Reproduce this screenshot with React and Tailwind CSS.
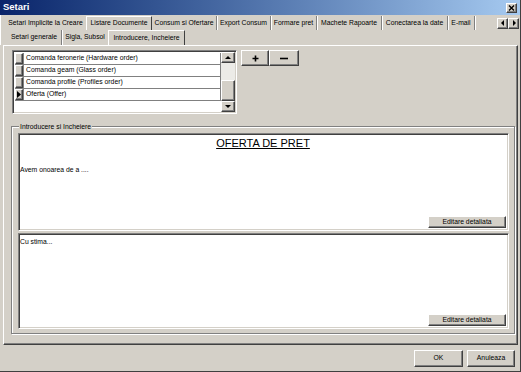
import React from 'react';

const raised = "border border-t-white border-l-white border-r-[#404040] border-b-[#404040] shadow-[inset_-1px_-1px_0_#808080] bg-[#d4d0c8]";
const sunken = "border border-t-[#808080] border-l-[#808080] border-r-white border-b-white shadow-[inset_1px_1px_0_#404040,inset_-1px_-1px_0_#d4d0c8]";

const Arrow = ({ dir }) => {
    const pts = {
        up: "1,5 4,2 7,5",
        down: "1,2 4,5 7,2",
        left: "5,1 2,4 5,7",
        right: "3,1 6,4 3,7",
    }[dir];
    return (
        <svg width="8" height="8" viewBox="0 0 8 8">
            <polygon points={pts} fill="#000" />
        </svg>
    );
};

const Tab = ({ label, w, selected, sep }) => (
    <div
        className={`flex items-center justify-center h-full ${w} ${selected ? 'border-t border-l border-r border-t-white border-l-white border-r-[#404040]' : ''} ${sep ? 'border-r border-r-[#808080] shadow-[1px_0_0_white]' : ''}`}
    >
        <span className="whitespace-nowrap">{label}</span>
    </div>
);

const rows = [
    "Comanda feronerie (Hardware order)",
    "Comanda geam (Glass order)",
    "Comanda profile (Profiles order)",
    "Oferta (Offer)",
];

export default function App() {
    return (
        <div className="w-[521px] h-[372px] bg-[#d4d0c8] overflow-hidden text-[6.8px] text-black font-['Liberation_Sans',Arial,sans-serif] flex flex-col border-r border-b border-r-[#404040] border-b-[#404040]">
            {/* title bar */}
            <div className="h-[15px] shrink-0 flex items-center justify-between pl-[3px] pr-[3px] bg-gradient-to-r from-[#0a246a] to-[#a6caf0]">
                <span className="text-white font-bold text-[9.5px]">Setari</span>
                <div className={`w-[11px] h-[10px] flex items-center justify-center ${raised}`}>
                    <svg width="7" height="6" viewBox="0 0 7 6">
                        <path d="M1 0.5 L6 5.5 M6 0.5 L1 5.5" stroke="#000" strokeWidth="1.4" />
                    </svg>
                </div>
            </div>

            {/* tab row 1 */}
            <div className="h-[15px] shrink-0 flex items-stretch pl-[4px] pt-[1px] border-l border-l-white">
                <Tab label="Setari Implicite la Creare" w="w-[81px]" />
                <Tab label="Listare Documente" w="w-[66px]" selected />
                <Tab label="Consum si Ofertare" w="w-[65px]" sep />
                <Tab label="Export Consum" w="w-[54px]" sep />
                <Tab label="Formare pret" w="w-[46px]" sep />
                <Tab label="Machete Rapoarte" w="w-[65px]" sep />
                <Tab label="Conectarea la date" w="w-[66px]" sep />
                <Tab label="E-mail" w="w-[27px]" sep />
                <div className="flex-1" />
                <div className="flex items-center gap-0 pr-[1px]">
                    <div className={`w-[11px] h-[11px] flex items-center justify-center ${raised}`}><Arrow dir="left" /></div>
                    <div className={`w-[11px] h-[11px] flex items-center justify-center ${raised}`}><Arrow dir="right" /></div>
                </div>
            </div>

            {/* tab row 2 */}
            <div className="h-[15px] shrink-0 flex items-stretch pl-[6px] border-l border-l-white">
                <Tab label="Setari generale" w="w-[55px]" sep />
                <Tab label="Sigla, Subsol" w="w-[46px]" />
                <Tab label="Introducere, Incheiere" w="w-[77px]" selected />
            </div>

            {/* page */}
            <div className="ml-[3px] w-[515px] h-[300px] shrink-0 border border-t-white border-l-white border-r-[#404040] border-b-[#404040] shadow-[inset_-1px_-1px_0_#808080] flex flex-col">
                <div className="flex pl-[8px] pt-[4px]">
                    {/* grid */}
                    <div className={`w-[225px] h-[64px] bg-white flex p-[1px] ${sunken}`}>
                        <div className="w-[207px] flex flex-col pl-[1px] pt-[1px]">
                            {rows.map((r, i) => (
                                <div key={r} className="h-[12px] flex border-b border-b-[#808080] border-r border-r-[#808080]">
                                    <div className={`w-[8px] h-full flex items-center justify-center ${raised}`}>
                                        {i === 3 && (
                                            <svg width="4" height="7" viewBox="0 0 4 7">
                                                <polygon points="0,0 4,3.5 0,7" fill="#000" />
                                            </svg>
                                        )}
                                    </div>
                                    <div className="flex-1 flex items-center pl-[2px] border-l border-l-[#808080]">{r}</div>
                                </div>
                            ))}
                        </div>
                        <div className="flex-1" />
                        <div className="w-[14px] flex flex-col">
                            <div className={`h-[11px] flex items-center justify-center ${raised}`}><Arrow dir="up" /></div>
                            <div className="h-[17px] bg-[#ecebe7]" />
                            <div className={`h-[21px] ${raised}`} />
                            <div className={`h-[11px] flex items-center justify-center ${raised}`}><Arrow dir="down" /></div>
                        </div>
                    </div>
                    {/* +/- */}
                    <div className="flex ml-[4px] h-[16px]">
                        <div className={`w-[28px] h-full flex items-center justify-center ${raised}`}>
                            <svg width="7" height="7" viewBox="0 0 7 7">
                                <path d="M3.5 0.5 V6.5 M0.5 3.5 H6.5" stroke="#000" strokeWidth="1.6" />
                            </svg>
                        </div>
                        <div className={`w-[30px] h-full flex items-center justify-center ${raised}`}>
                            <svg width="8" height="3" viewBox="0 0 8 3">
                                <path d="M0 1.5 H8" stroke="#000" strokeWidth="1.6" />
                            </svg>
                        </div>
                    </div>
                </div>

                {/* group box */}
                <div className="relative ml-[7px] mt-[12px] w-[504px] h-[208px] border border-[#808080] shadow-[inset_1px_1px_0_white,1px_1px_0_white] pt-[6px] pl-[6px] flex flex-col gap-[2px]">
                    <span className="absolute -top-[5px] left-[7px] bg-[#d4d0c8] px-[1px] leading-[9px]">Introducere si Incheiere</span>
                    <div className={`w-[491px] h-[98px] bg-white flex flex-col py-[2px] pl-[1px] pr-[2px] ${sunken}`}>
                        <div className="text-center text-[11px] underline leading-[12px] pt-[1px]">OFERTA DE PRET</div>
                        <div className="mt-[16px] leading-[9px]">Avem onoarea de a ....</div>
                        <div className="flex-1" />
                        <div className={`self-end w-[78px] h-[12px] flex items-center justify-center ${raised}`}>Editare detaliata</div>
                    </div>
                    <div className={`w-[491px] h-[96px] bg-white flex flex-col py-[2px] pl-[1px] pr-[2px] ${sunken}`}>
                        <div className="leading-[9px] pt-[1px]">Cu stima...</div>
                        <div className="flex-1" />
                        <div className={`self-end w-[78px] h-[12px] flex items-center justify-center ${raised}`}>Editare detaliata</div>
                    </div>
                </div>
            </div>

            {/* footer */}
            <div className="flex-1 flex justify-end items-start pt-[5px] pr-[5px] gap-[4px]">
                <div className={`w-[49px] h-[17px] flex items-center justify-center ${raised}`}>OK</div>
                <div className={`w-[48px] h-[17px] flex items-center justify-center ${raised}`}>Anuleaza</div>
            </div>
        </div>
    );
}
